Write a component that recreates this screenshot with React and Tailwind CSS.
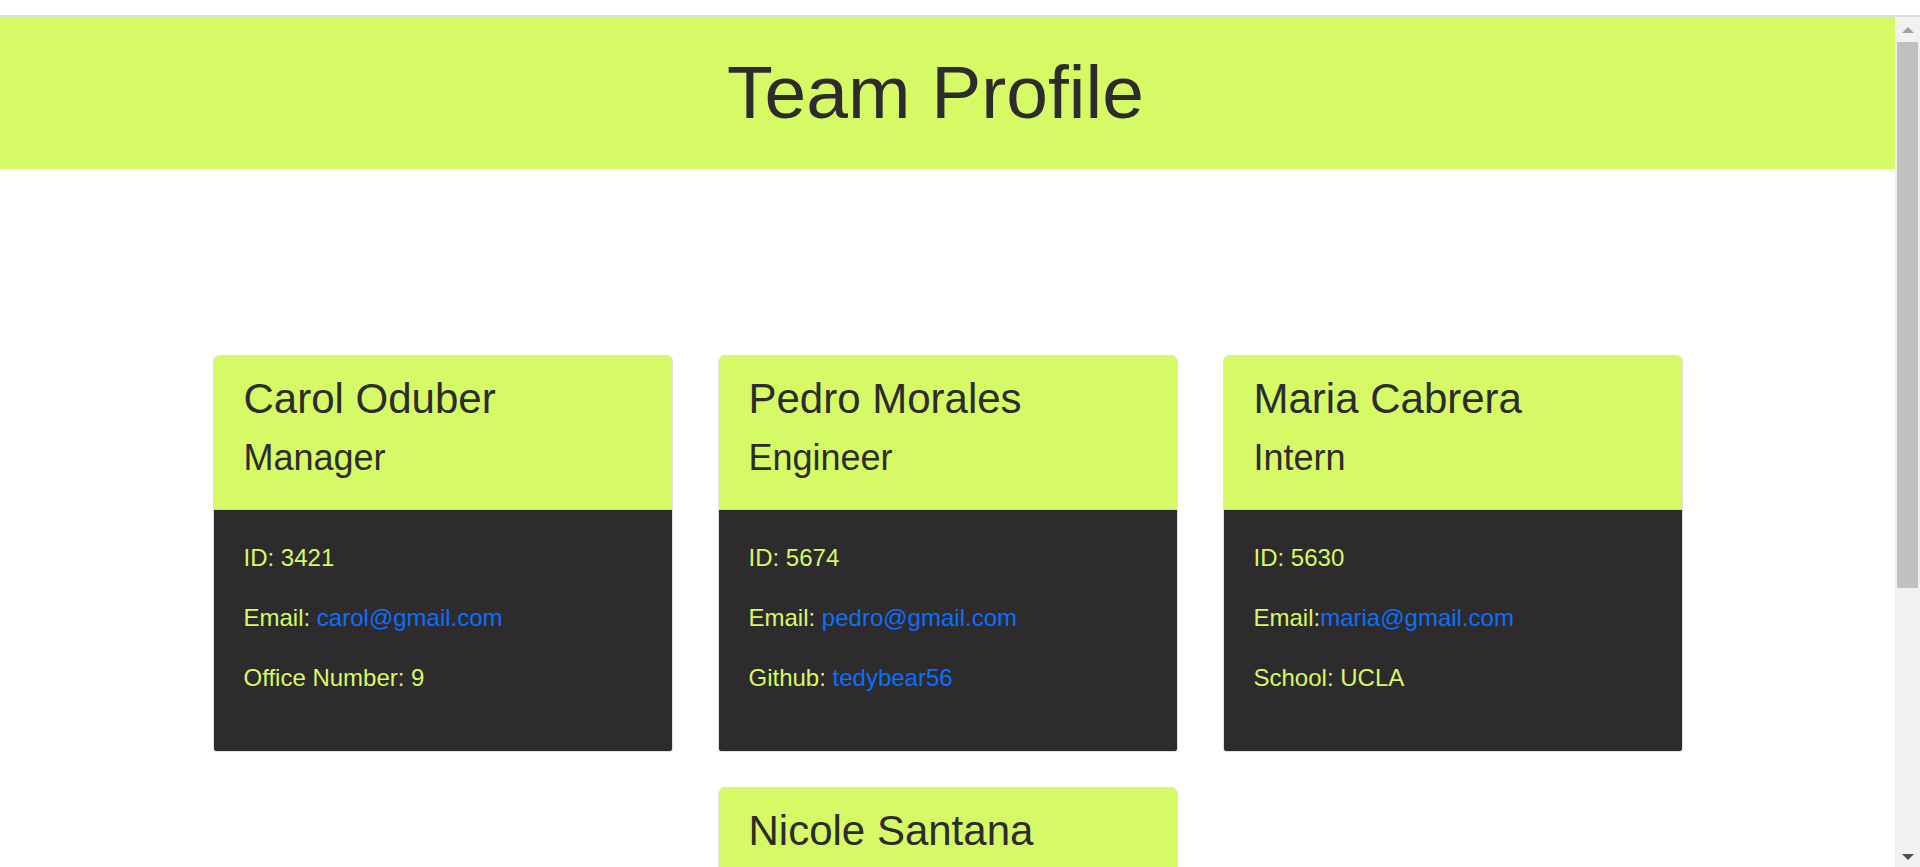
import React from "react";

const team = [
  {
    name: "Carol Oduber",
    role: "Manager",
    id: "3421",
    email: "carol@gmail.com",
    emailGap: true,
    extraLabel: "Office Number: 9",
  },
  {
    name: "Pedro Morales",
    role: "Engineer",
    id: "5674",
    email: "pedro@gmail.com",
    emailGap: true,
    extraLabel: "Github: ",
    extraLink: "tedybear56",
  },
  {
    name: "Maria Cabrera",
    role: "Intern",
    id: "5630",
    email: "maria@gmail.com",
    emailGap: false,
    extraLabel: "School: UCLA",
  },
  {
    name: "Nicole Santana",
    role: "Intern",
    id: "5631",
    email: "nicole@gmail.com",
    emailGap: true,
    extraLabel: "School: UCF",
  },
];

const MemberCard = ({ member }) => (
  <div className="w-[460px] rounded-t-[6px] rounded-b-[3px] border border-[#dfdfdf] overflow-hidden">
    <div className="bg-[#d6f966] px-[30px] pt-[18px] pb-[17px] border-b border-[#c9df7a] text-[#2d2b2c]">
      <h3 className="text-[42px] leading-[1.2] mb-[12px]">{member.name}</h3>
      <h4 className="text-[36px] leading-[1.2] mb-[12px]">{member.role}</h4>
    </div>
    <div className="bg-[#2d2b2c] px-[30px] pt-[30px] pb-[31px] text-[#d6f966] text-[24px] leading-[36px]">
      <p className="mb-[24px]">ID: {member.id}</p>
      <p className="mb-[24px]">
        {member.emailGap ? "Email: " : "Email:"}
        <a href={`mailto:${member.email}`} className="text-[#0d6efd]">
          {member.email}
        </a>
      </p>
      <p className="mb-[24px]">
        {member.extraLabel}
        {member.extraLink && (
          <a href="#" className="text-[#0d6efd]">
            {member.extraLink}
          </a>
        )}
      </p>
    </div>
  </div>
);

const App = () => {
  return (
    <div
      className="h-[867px] overflow-hidden flex flex-col bg-white"
      style={{ fontFamily: '"Liberation Sans", Arial, sans-serif' }}
    >
      {/* browser chrome edge */}
      <div className="h-[15px] shrink-0 bg-white" />
      <div className="h-[2px] shrink-0 bg-[#dcdcdc]" />

      <div className="flex flex-1 min-h-0">
        <main className="flex-1 min-w-0 overflow-hidden">
          <header className="bg-[#d6f966] h-[152px] flex items-center justify-center pr-[24px]">
            <h1 className="text-[75px] leading-none text-[#2d2b2c] pb-[2px]">Team Profile</h1>
          </header>

          <section className="pt-[186px] flex flex-wrap justify-center gap-x-[45px] gap-y-[35px]">
            {team.map((member) => (
              <MemberCard key={member.id} member={member} />
            ))}
          </section>
        </main>

        {/* scrollbar */}
        <div className="w-[25px] shrink-0 bg-[#f1f1f1] flex flex-col items-center">
          <div className="h-[25px] flex items-center justify-center">
            <div className="w-0 h-0 border-x-[6px] border-x-transparent border-b-[6px] border-b-[#a3a3a3]" />
          </div>
          <div className="w-[21px] h-[546px] bg-[#c1c1c1]" />
          <div className="flex-1" />
          <div className="h-[20px] flex items-center justify-center">
            <div className="w-0 h-0 border-x-[6px] border-x-transparent border-t-[6px] border-t-[#505050]" />
          </div>
        </div>
      </div>
    </div>
  );
};

export default App;
